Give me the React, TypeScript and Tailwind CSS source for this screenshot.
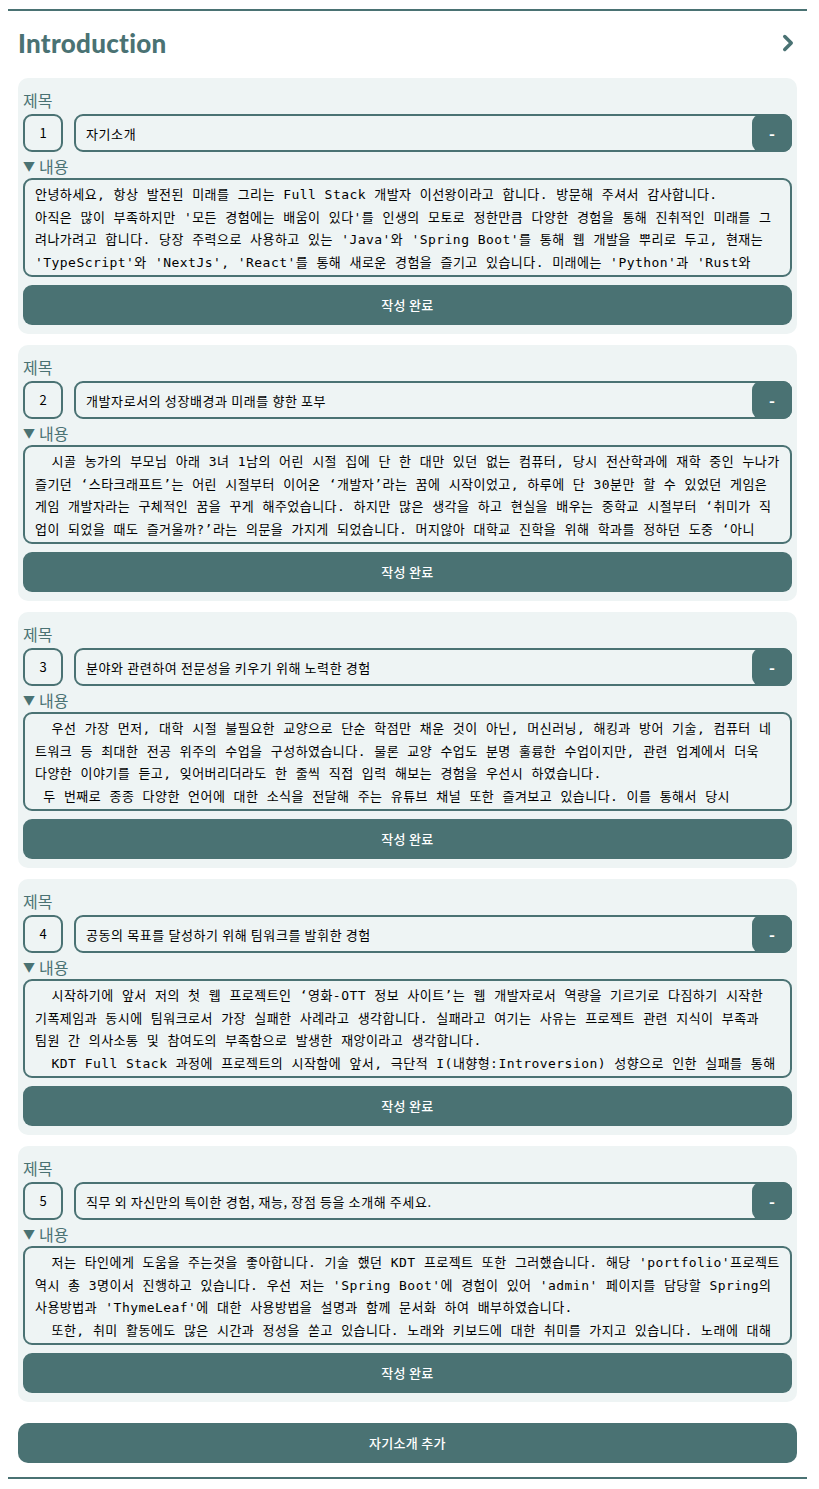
import { ChevronRight } from "lucide-react";

interface IntroItem {
  id: number;
  title: string;
  lines: string[];
}

const items: IntroItem[] = [
  {
    id: 1,
    title: "자기소개",
    lines: [
      "안녕하세요, 항상 발전된 미래를 그리는 Full Stack 개발자 이선왕이라고 합니다. 방문해 주셔서 감사합니다.",
      "아직은 많이 부족하지만 '모든 경험에는 배움이 있다'를 인생의 모토로 정한만큼 다양한 경험을 통해 진취적인 미래를 그",
      "려나가려고 합니다. 당장 주력으로 사용하고 있는 'Java'와 'Spring Boot'를 통해 웹 개발을 뿌리로 두고, 현재는",
      "'TypeScript'와 'NextJs', 'React'를 통해 새로운 경험을 즐기고 있습니다. 미래에는 'Python'과 'Rust와",
    ],
  },
  {
    id: 2,
    title: "개발자로서의 성장배경과 미래를 향한 포부",
    lines: [
      "  시골 농가의 부모님 아래 3녀 1남의 어린 시절 집에 단 한 대만 있던 없는 컴퓨터, 당시 전산학과에 재학 중인 누나가",
      "즐기던 ‘스타크래프트’는 어린 시절부터 이어온 ‘개발자’라는 꿈에 시작이었고, 하루에 단 30분만 할 수 있었던 게임은",
      "게임 개발자라는 구체적인 꿈을 꾸게 해주었습니다. 하지만 많은 생각을 하고 현실을 배우는 중학교 시절부터 ‘취미가 직",
      "업이 되었을 때도 즐거울까?’라는 의문을 가지게 되었습니다. 머지않아 대학교 진학을 위해 학과를 정하던 도중 ‘아니",
    ],
  },
  {
    id: 3,
    title: "분야와 관련하여 전문성을 키우기 위해 노력한 경험",
    lines: [
      "  우선 가장 먼저, 대학 시절 불필요한 교양으로 단순 학점만 채운 것이 아닌, 머신러닝, 해킹과 방어 기술, 컴퓨터 네",
      "트워크 등 최대한 전공 위주의 수업을 구성하였습니다. 물론 교양 수업도 분명 훌륭한 수업이지만, 관련 업계에서 더욱",
      "다양한 이야기를 듣고, 잊어버리더라도 한 줄씩 직접 입력 해보는 경험을 우선시 하였습니다.",
      " 두 번째로 종종 다양한 언어에 대한 소식을 전달해 주는 유튜브 채널 또한 즐겨보고 있습니다. 이를 통해서 당시",
    ],
  },
  {
    id: 4,
    title: "공동의 목표를 달성하기 위해 팀워크를 발휘한 경험",
    lines: [
      "  시작하기에 앞서 저의 첫 웹 프로젝트인 ‘영화-OTT 정보 사이트’는 웹 개발자로서 역량을 기르기로 다짐하기 시작한",
      "기폭제임과 동시에 팀워크로서 가장 실패한 사례라고 생각합니다. 실패라고 여기는 사유는 프로젝트 관련 지식이 부족과",
      "팀원 간 의사소통 및 참여도의 부족함으로 발생한 재앙이라고 생각합니다.",
      "  KDT Full Stack 과정에 프로젝트의 시작함에 앞서, 극단적 I(내향형:Introversion) 성향으로 인한 실패를 통해",
    ],
  },
  {
    id: 5,
    title: "직무 외 자신만의 특이한 경험, 재능, 장점 등을 소개해 주세요.",
    lines: [
      "  저는 타인에게 도움을 주는것을 좋아합니다. 기술 했던 KDT 프로젝트 또한 그러했습니다. 해당 'portfolio'프로젝트",
      "역시 총 3명이서 진행하고 있습니다. 우선 저는 'Spring Boot'에 경험이 있어 'admin' 페이지를 담당할 Spring의",
      "사용방법과 'ThymeLeaf'에 대한 사용방법을 설명과 함께 문서화 하여 배부하였습니다.",
      "  또한, 취미 활동에도 많은 시간과 정성을 쏟고 있습니다. 노래와 키보드에 대한 취미를 가지고 있습니다. 노래에 대해",
    ],
  },
];

const sans = "font-['Noto_Sans_CJK_KR','Noto_Sans',sans-serif]";

function IntroCard({ item }: { item: IntroItem }) {
  return (
    <div className="flex h-[256px] flex-col rounded-[10px] bg-[#eef4f4] px-[5px] pt-[12px] pb-[9px]">
      <label className={`${sans} h-[20px] text-[16px] leading-[20px] text-[#4a7273]`}>제목</label>
      <div className="mt-[4px] flex h-[38px] gap-[11px]">
        <div
          className={`${sans} flex w-[40px] shrink-0 items-center justify-center rounded-[9px] border-2 border-[#4a7273] text-[13px] text-black`}
        >
          {item.id}
        </div>
        <div className="relative flex-1">
          <input
            className={`${sans} h-full w-full rounded-[9px] border-2 border-[#4a7273] bg-transparent pl-[10px] pr-[48px] text-[13px] tracking-[0.6px] text-black outline-none`}
            defaultValue={item.title}
          />
          <button
            className={`${sans} absolute top-0 right-0 flex h-full w-[40px] items-center justify-center rounded-[9px] bg-[#4a7273] text-[16px] font-bold text-white`}
          >
            -
          </button>
        </div>
      </div>
      <div className={`${sans} mt-[4px] flex h-[20px] items-center gap-[4px] text-[16px] leading-[20px] text-[#4a7273]`}>
        <span className="text-[12px]">▼</span>
        <span>내용</span>
      </div>
      <textarea
        wrap="off"
        readOnly
        className="mt-[2px] h-[99px] w-full resize-none overflow-hidden rounded-[9px] border-2 border-[#4a7273] bg-transparent px-[10px] pt-[4px] font-['DejaVu_Sans_Mono','Noto_Sans_CJK_KR',monospace] text-[13px] leading-[22.6px] tracking-[0.45px] whitespace-pre text-black outline-none"
        defaultValue={item.lines.join("\n")}
      />
      <button
        className={`${sans} mt-[8px] h-[40px] w-full rounded-[9px] bg-[#4a7273] text-[13px] font-medium tracking-[0.3px] text-white`}
      >
        작성 완료
      </button>
    </div>
  );
}

export default function App() {
  return (
    <div className="min-h-screen bg-white pt-[9px] pr-[12px] pl-[8px]">
      <div className="border-t-2 border-[#4a7273] px-[10px]">
        <div className="mt-[16px] flex h-[32px] items-center justify-between">
          <h1 className="font-['Lato',sans-serif] text-[26px] font-black tracking-[0.3px] text-[#4a7273]">
            Introduction
          </h1>
          <ChevronRight className="mr-[-4px] h-[26px] w-[26px] text-[#4a7273]" strokeWidth={3.2} />
        </div>

        <div className="mt-[19px] flex flex-col gap-[11px]">
          {items.map((item) => (
            <IntroCard key={item.id} item={item} />
          ))}
        </div>

        <button
          className={`${sans} mt-[21px] h-[40px] w-full rounded-[10px] bg-[#4a7273] text-[13px] font-medium tracking-[0.3px] text-white`}
        >
          자기소개 추가
        </button>
      </div>
      <div className="mt-[14px] border-t-2 border-[#4a7273]" />
    </div>
  );
}
